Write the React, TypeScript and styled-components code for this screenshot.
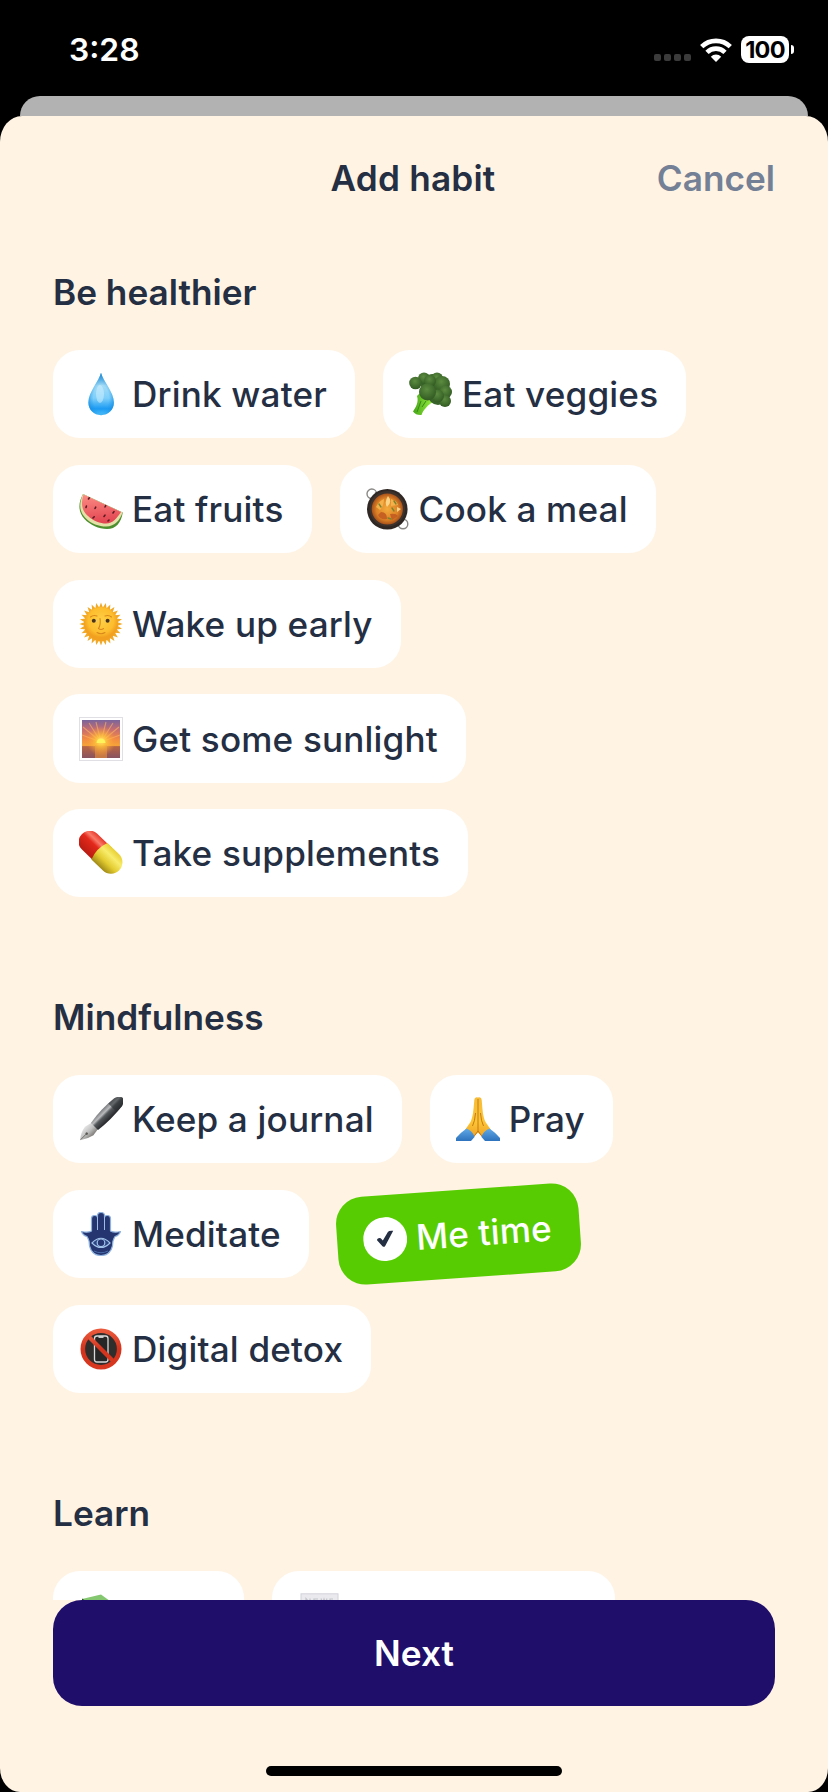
import styled, { createGlobalStyle } from "styled-components";
import { ReactNode } from "react";

type Habit = {
  name?: string;
  icon: ReactNode;
  selected?: boolean;
  width?: number;
};
type Section = {
  title: string;
  habits: Habit[];
};

const Drop = () => (
  <Icon viewBox="0 0 44 44">
    <defs>
      <linearGradient id="drop" x1="0" y1="0" x2="0" y2="1">
        <stop offset="0" stopColor="#5aa6cf" />
        <stop offset="0.3" stopColor="#a5dcf6" />
        <stop offset="0.6" stopColor="#7dcffa" />
        <stop offset="0.85" stopColor="#1b9af2" />
        <stop offset="1" stopColor="#57c6fb" />
      </linearGradient>
      <radialGradient id="dropEdge" cx="0.5" cy="0.6" r="0.55">
        <stop offset="0.55" stopColor="#1d97ea" stopOpacity="0" />
        <stop offset="1" stopColor="#168be0" stopOpacity="0.8" />
      </radialGradient>
    </defs>
    <path
      d="M22 .8C20 9 9.4 20 9.400 30.600C9.400 38 15 43.200 22.100 43.200S34.900 38 34.900 30.600C34.900 20 24 9 22 .8Z"
      fill="url(#drop)"
    />
    <path
      d="M22 .8C20 9 9.400 20 9.400 30.600C9.400 38 15 43.200 22.100 43.200S34.900 38 34.900 30.600C34.900 20 24 9 22 .8Z"
      fill="url(#dropEdge)"
    />
    <ellipse cx="21" cy="22" rx="4" ry="9" fill="#d4f2ff" opacity="0.5" />
  </Icon>
);

const Broccoli = () => (
  <Icon viewBox="0 0 44 44">
    <defs>
      <radialGradient id="floret" cx="0.45" cy="0.35" r="0.65">
        <stop offset="0" stopColor="#5c8c40" />
        <stop offset="1" stopColor="#315a22" />
      </radialGradient>
      <linearGradient id="stem" x1="0" y1="0" x2="1" y2="0">
        <stop offset="0" stopColor="#45a516" />
        <stop offset="0.6" stopColor="#8ee53a" />
        <stop offset="1" stopColor="#49a31c" />
      </linearGradient>
    </defs>
    <path
      d="M8 24C10 30 7 35 4 39.5Q7 43.5 12.5 43C14 38 19 33 25 29L33 31L28 22L12 20Z"
      fill="url(#stem)"
    />
    <path d="M12 29L8 40M17 29L13 35" stroke="#368b18" strokeWidth="1" />
    <circle cx="24" cy="14" r="12" fill="#38632a" />
    <circle cx="29" cy="23" r="10" fill="#38632a" />
    <circle cx="15" cy="6.5" r="6" fill="url(#floret)" />
    <circle cx="28" cy="6.5" r="6" fill="url(#floret)" />
    <circle cx="6.5" cy="11" r="6.3" fill="url(#floret)" />
    <circle cx="33" cy="12" r="8" fill="url(#floret)" />
    <circle cx="21" cy="9" r="6" fill="url(#floret)" />
    <circle cx="36.500" cy="20" r="6.500" fill="url(#floret)" />
    <circle cx="36" cy="29" r="6" fill="url(#floret)" />
    <circle cx="28.500" cy="24" r="6.500" fill="url(#floret)" />
    <circle cx="18.5" cy="20" r="8.5" fill="url(#floret)" />
  </Icon>
);

const Watermelon = () => (
  <Icon viewBox="0 0 44 44">
    <defs>
      <linearGradient id="flesh" x1="0.3" y1="0" x2="0.4" y2="1">
        <stop offset="0" stopColor="#fb8b83" />
        <stop offset="1" stopColor="#e24350" />
      </linearGradient>
    </defs>
    <path
      d="M4 7C-1 16 -1 25 5.5 32C11 38 20 42 28 42C37 42 42 36 43.8 25.5Z"
      fill="#4d8f2e"
    />
    <path
      d="M4 7C0 16 0 24 6 30.5C12 37 20 39.5 27 39.5C36 39.5 41 33 43.5 25.5Z"
      fill="#e4e0a8"
    />
    <path
      d="M4.5 7.5C1.5 17 3 24 9 29C15 34.5 21 36.5 27 36.5C34 36.5 38 31 42 25Z"
      fill="url(#flesh)"
    />
    <path
      d="M9.5 12l.8 -1.2M7 20.5l.4 -1.4M16 21.5l.7 -1.4M26 20l.7 -1.4M14 31l1.2 -1.2M25 29.5l1 -1.4M34 26l1 -1.4M29 34l1 -1"
      stroke="#5a1a22"
      strokeWidth="1.6"
      strokeLinecap="round"
    />
  </Icon>
);

const Pan = () => (
  <Icon viewBox="0 0 44 44">
    <defs>
      <radialGradient id="stew">
        <stop offset="0" stopColor="#f3ab3c" />
        <stop offset="0.7" stopColor="#dc8226" />
        <stop offset="1" stopColor="#a9511a" />
      </radialGradient>
    </defs>
    <g fill="none" stroke="#8a8886" strokeWidth="1.4">
      <circle cx="5.8" cy="6.8" r="4.8" />
      <circle cx="37" cy="37" r="4.8" />
    </g>
    <circle cx="21.3" cy="22.3" r="20.3" fill="#2f2723" />
    <circle cx="21.3" cy="21.8" r="17.8" fill="#3e322c" />
    <circle cx="21.3" cy="22" r="15.6" fill="url(#stew)" />
    <path d="M22 9q5 6 -1 11q-3 -5 1 -11ZM31 20l4 2l-4 3Z" fill="#fbd488" />
    <path
      d="M10 20q4 -7 8 -8q0 7 -4 11ZM25 12q6 2 7 6l-7 1Z"
      fill="#f4b149"
    />
    <path
      d="M15 25q6 0 6 7q-7 1 -9 -4ZM24 27q6 -1 8 2l-6 4Z"
      fill="#c55f22"
    />
    <path
      d="M13 17l2 3M26 21l2 3M22 31l3 1M28 14l2 3"
      stroke="#7d832d"
      strokeWidth="1.4"
      strokeLinecap="round"
    />
  </Icon>
);

const Sun = () => (
  <Icon viewBox="0 0 44 44">
    <defs>
      <radialGradient id="sun" cx="0.5" cy="0.4">
        <stop offset="0" stopColor="#fed047" />
        <stop offset="0.75" stopColor="#fdbd2d" />
        <stop offset="1" stopColor="#f2a01f" />
      </radialGradient>
    </defs>
    {Array.from({ length: 28 }, (_, i) => (
      <path
        key={i}
        d="M19.9 6L22 .4L24.1 6Z"
        fill="#f2a927"
        transform={`rotate(${(i * 360) / 28} 22 22)`}
      />
    ))}
    <circle cx="22" cy="22" r="17" fill="url(#sun)" />
    <path
      d="M11.5 15q3 -2.5 6.5 -1M32.5 15q-3 -2.5 -6.500 -1M21 16.5q1 6 -1.5 10q2.500 2 5 0M18 30.5q4 2.5 8 0"
      fill="none"
      stroke="#d8871b"
      strokeWidth="1.1"
      strokeLinecap="round"
    />
    <ellipse cx="15.3" cy="18.8" rx="2.7" ry="1.7" fill="#eecb80" />
    <ellipse cx="28.700" cy="18.8" rx="2.7" ry="1.7" fill="#eecb80" />
    <circle cx="14.8" cy="18.8" r="2" fill="#4a3418" />
    <circle cx="28.6" cy="18.8" r="2" fill="#4a3418" />
  </Icon>
);

const Sunrise = () => (
  <Icon viewBox="0 0 44 44">
    <defs>
      <linearGradient id="sky" x1="0" y1="0" x2="0" y2="1">
        <stop offset="0" stopColor="#79649b" />
        <stop offset="0.25" stopColor="#c56d72" />
        <stop offset="0.5" stopColor="#f28a43" />
        <stop offset="0.67" stopColor="#f5a338" />
        <stop offset="0.7" stopColor="#b76543" />
        <stop offset="1" stopColor="#885361" />
      </linearGradient>
      <radialGradient id="glow">
        <stop offset="0" stopColor="#fff27c" />
        <stop offset="0.35" stopColor="#ffc93c" stopOpacity="0.9" />
        <stop offset="1" stopColor="#ff9a3b" stopOpacity="0" />
      </radialGradient>
    </defs>
    <rect x="0.5" y="0.5" width="43" height="43" fill="#fff" stroke="#dfdfe4" />
    <rect x="3" y="3" width="38" height="38" fill="url(#sky)" />
    <path
      d="M22 25L4 10M22 25L10 6M22 25L17 5M22 25L27 5M22 25L34 6M22 25L40 10M22 25L3 18M22 25L41 18"
      stroke="#ffb860"
      strokeWidth="1.1"
      opacity="0.6"
    />
    <rect x="16" y="28" width="12" height="13" fill="#e08a3a" opacity="0.7" />
    <circle cx="22" cy="24" r="15" fill="url(#glow)" opacity="0.85" />
    <path d="M17.5 26a4.5 4.5 0 0 1 9 0Z" fill="#fff35c" />
  </Icon>
);

const Pill = () => (
  <Icon viewBox="0 0 44 44">
    <defs>
      <linearGradient id="red" x1="0" y1="0" x2="0" y2="1">
        <stop offset="0" stopColor="#e8392b" />
        <stop offset="0.25" stopColor="#f97a68" />
        <stop offset="0.45" stopColor="#e3281b" />
        <stop offset="1" stopColor="#b81c12" />
      </linearGradient>
      <linearGradient id="yellow" x1="0" y1="0" x2="0" y2="1">
        <stop offset="0" stopColor="#e9cf32" />
        <stop offset="0.3" stopColor="#f8ec6c" />
        <stop offset="0.65" stopColor="#e3cc30" />
        <stop offset="1" stopColor="#a08a18" />
      </linearGradient>
    </defs>
    <g transform="rotate(44 21.5 21.2)">
      <path
        d="M27 10.2H6a10.5 11 0 0 0 -10.500 11a10.500 11 0 0 0 10.500 11H27Z"
        fill="url(#red)"
      />
      <path
        d="M20 9.7H36a11.5 11.5 0 0 1 0 23H20Q15.5 21.2 20 9.7Z"
        fill="url(#yellow)"
      />
    </g>
  </Icon>
);

const Pen = () => (
  <Icon viewBox="0 0 44 44">
    <defs>
      <linearGradient id="barrel" x1="0" y1="0" x2="0" y2="1">
        <stop offset="0" stopColor="#77797c" />
        <stop offset="0.3" stopColor="#b9bbbd" />
        <stop offset="0.5" stopColor="#56595c" />
        <stop offset="1" stopColor="#222428" />
      </linearGradient>
      <linearGradient id="nib" x1="0" y1="0" x2="0" y2="1">
        <stop offset="0" stopColor="#e2e3e2" />
        <stop offset="0.5" stopColor="#bfc0bf" />
        <stop offset="1" stopColor="#7b7975" />
      </linearGradient>
    </defs>
    <g transform="translate(1 43.300) rotate(-45)">
      <path
        d="M0 0Q6 -5 13 -6L22 -4V4.5L13 6Q6 4.500 0 0Z"
        fill="url(#nib)"
      />
      <path d="M1 0H9" stroke="#5c5a56" strokeWidth="0.8" />
      <circle cx="9.5" cy="0" r="1.3" fill="#5c5a56" />
      <path
        d="M20 -4.5Q36 -7.500 54 -5.5Q60 -3.5 60 0T54 5.500Q36 7.500 20 5.500Z"
        fill="url(#barrel)"
      />
      <path d="M54 -5.5Q60 -3.5 60 0T54 5.5Q50 6 46 6V-6Z" fill="#2c2e31" opacity="0.6" />
    </g>
  </Icon>
);

const Pray = () => (
  <Icon viewBox="0 0 44 44">
    <defs>
      <linearGradient id="hand" x1="0" y1="0" x2="0" y2="1">
        <stop offset="0" stopColor="#f6bc38" />
        <stop offset="0.6" stopColor="#fcc534" />
        <stop offset="1" stopColor="#ee9f26" />
      </linearGradient>
      <linearGradient id="sleeve" x1="0" y1="0" x2="0" y2="1">
        <stop offset="0" stopColor="#61a9e7" />
        <stop offset="1" stopColor="#2d72bd" />
      </linearGradient>
    </defs>
    <path
      d="M22 .5Q18.500 -.5 18.300 3C17.500 13 17 20 14.500 25L9 33L16 41.500L22 35.500L28 41.500L35 33L29.500 25C27 20 26.500 13 25.700 3Q25.500 -.5 22 .5Z"
      fill="url(#hand)"
    />
    <path
      d="M22 2V34M22 34L17.500 40M22 34L26.500 40M19.500 16Q19 24 16.500 29M24.500 16Q25 24 27.500 29"
      stroke="#c67a16"
      strokeWidth="1"
      fill="none"
    />
    <path d="M10.500 31.500Q17 34 18.500 40L15 44H0V41Q4 36 10.500 31.500Z" fill="url(#sleeve)" />
    <path d="M33.500 31.500Q27 34 25.500 40L29 44H44V41Q40 36 33.500 31.500Z" fill="url(#sleeve)" />
  </Icon>
);

const Hamsa = () => (
  <Icon viewBox="0 0 44 44">
    <path
      d="M12.500 6.500q0 -3 3 -3t3 2V3.500q0 -3 3.500 -3t3.500 3V5.500q0 -2 3 -2t3 3V19Q35 21 41.500 19.500Q40 23.500 36 24.500Q33.500 28 33.500 34Q31 43.500 22 43.500T10.500 34Q10.500 28 8 24.500Q4 23.500 2.500 19.500Q9 21 12.500 19Z"
      fill="#24356f"
      stroke="#8fb2de"
      strokeWidth="1.2"
      strokeLinejoin="round"
    />
    <path d="M18.500 5V18M25.500 5V18" stroke="#9dbde6" strokeWidth="1" />
    <path
      d="M13 31Q22 21.500 31 31Q22 40 13 31Z"
      fill="#2f4685"
      stroke="#a1c2e9"
      strokeWidth="1.2"
    />
    <circle cx="22" cy="30.800" r="3.800" fill="#24356f" stroke="#a1c2e9" strokeWidth="1.2" />
    <path d="M15 39q7 3.500 14 0" stroke="#4a6cab" strokeWidth="1" fill="none" />
  </Icon>
);

const NoPhones = () => (
  <Icon viewBox="0 0 44 44">
    <defs>
      <linearGradient id="ban" x1="0" y1="0" x2="0" y2="1">
        <stop offset="0" stopColor="#e9583b" />
        <stop offset="0.5" stopColor="#d2331d" />
        <stop offset="1" stopColor="#d8381f" />
      </linearGradient>
    </defs>
    <circle cx="22" cy="22" r="18" fill="#302e2d" />
    <rect
      x="15.5"
      y="9"
      width="13.5"
      height="26"
      rx="2.5"
      fill="#272626"
      stroke="#d9d9d9"
      strokeWidth="1.3"
    />
    <path d="M19.5 10h5" stroke="#d9d9d9" strokeWidth="1.8" />
    <path d="M9 9L35 35" stroke="url(#ban)" strokeWidth="4.3" />
    <circle cx="22" cy="22" r="18.2" fill="none" stroke="url(#ban)" strokeWidth="4.6" />
  </Icon>
);

const Check = () => (
  <Icon viewBox="0 0 44 44">
    <circle cx="22" cy="22" r="22" fill="#fff" />
    <path
      d="M13.600 22.300Q15 19.600 17.600 20.800L19.600 23.200L25.200 15Q26.200 13.600 30.600 14.300L21.400 29Q20.200 30 18.800 28.800Z"
      fill="#252f43"
    />
  </Icon>
);

const Book = () => (
  <Icon viewBox="0 0 44 44">
    <path d="M3 6L22 1.5L42 16L24 40L3 12Z" fill="#85c770" />
    <path d="M3 5.5L7 8L26 37L24 42L3 12Z" fill="#2c5428" />
  </Icon>
);

const News = () => (
  <Icon viewBox="0 0 44 44">
    <rect x="3" y="0.8" width="37" height="42" fill="#e9e9ee" stroke="#d2d2da" />
    <path
      d="M8 10V5.500l4 4.500V5.500M20 6h-4v4h4M23 5.500l1.500 4.500L26 6l1.500 4L29 5.500M35 6h-3v2h3V10h-3"
      fill="none"
      stroke="#c3c3cb"
      strokeWidth="1.2"
    />
  </Icon>
);

const sections: Section[] = [
  {
    title: "Be healthier",
    habits: [
      { name: "Drink water", icon: <Drop /> },
      { name: "Eat veggies", icon: <Broccoli /> },
      { name: "Eat fruits", icon: <Watermelon /> },
      { name: "Cook a meal", icon: <Pan /> },
      { name: "Wake up early", icon: <Sun /> },
      { name: "Get some sunlight", icon: <Sunrise /> },
      { name: "Take supplements", icon: <Pill /> },
    ],
  },
  {
    title: "Mindfulness",
    habits: [
      { name: "Keep a journal", icon: <Pen /> },
      { name: "Pray", icon: <Pray /> },
      { name: "Meditate", icon: <Hamsa /> },
      { name: "Me time", icon: <Check />, selected: true },
      { name: "Digital detox", icon: <NoPhones /> },
    ],
  },
  {
    title: "Learn",
    // only the top edge of these shows above the footer
    habits: [
      { icon: <Book />, width: 191 },
      { icon: <News />, width: 343 },
    ],
  },
];

function App() {
  return (
    <Screen>
      <GlobalStyle />
      <StatusBar>
        <Time>3:28</Time>
        <StatusIcons>
          <Signal>
            <i />
            <i />
            <i />
            <i />
          </Signal>
          <Wifi viewBox="0 0 32 24">
            <g fill="none" stroke="#fff" strokeWidth="4.6">
              <path d="M1.7 8.7a20.5 20.5 0 0 1 28.6 0" />
              <path d="M7 14.3a12.8 12.8 0 0 1 18 0" />
            </g>
            <path d="M10.8 18.7a7.4 7.4 0 0 1 10.4 0L16 24Z" fill="#fff" />
          </Wifi>
          <Battery>100</Battery>
          <BatteryCap />
        </StatusIcons>
      </StatusBar>
      <BackSheet />
      <Sheet>
        <Header>
          <Title>Add habit</Title>
          <Cancel>Cancel</Cancel>
        </Header>
        <Content>
          {sections.map((section) => (
            <section key={section.title}>
              <Heading>{section.title}</Heading>
              <Habits>
                {section.habits.map((habit, index) => (
                  <Chip
                    key={index}
                    $selected={habit.selected}
                    $width={habit.width}
                  >
                    {habit.icon}
                    {habit.name}
                  </Chip>
                ))}
              </Habits>
            </section>
          ))}
        </Content>
        <Footer>
          <NextButton>Next</NextButton>
          <HomeIndicator />
        </Footer>
      </Sheet>
    </Screen>
  );
}

export default App;

const GlobalStyle = createGlobalStyle`
  * {
    box-sizing: border-box;
  }

  body {
    margin: 0;
    background: #000;
    font-family: Inter, "Liberation Sans", sans-serif;
  }

  button {
    border: none;
    background: none;
    padding: 0;
    font: inherit;
  }
`;

const Screen = styled.div`
  display: flex;
  flex-direction: column;
  width: 828px;
  height: 1792px;
  overflow: hidden;
  background: #000;
`;

const StatusBar = styled.div`
  display: flex;
  justify-content: space-between;
  align-items: center;
  height: 96px;
  padding: 3px 34px 0 69px;
  color: #fff;
`;

const Time = styled.span`
  font-size: 31.8px;
  font-weight: 600;
`;

const StatusIcons = styled.div`
  display: flex;
  align-items: center;
`;

const Signal = styled.div`
  display: flex;
  gap: 3px;
  margin: 16px 9px 0 0;

  i {
    width: 7px;
    height: 7px;
    border-radius: 2px;
    background: #3b3b3b;
  }
`;

const Wifi = styled.svg`
  width: 32px;
  height: 24px;
  margin-right: 9px;
`;

const Battery = styled.span`
  width: 48px;
  height: 27px;
  border-radius: 8px;
  background: #fff;
  color: #000;
  font-size: 23.5px;
  font-weight: 700;
  letter-spacing: -0.8px;
  line-height: 27px;
  text-align: center;
`;

const BatteryCap = styled.span`
  width: 3px;
  height: 9px;
  margin-left: 2px;
  border-radius: 0 4px 4px 0;
  background: #fff;
`;

const BackSheet = styled.div`
  flex: none;
  height: 20px;
  margin: 0 20px;
  border-radius: 20px 20px 0 0;
  background: #b2b2b2;
`;

const Sheet = styled.main`
  display: flex;
  flex: 1;
  flex-direction: column;
  min-height: 0;
  overflow: hidden;
  border-radius: 22px 22px 20px 20px / 26px 26px 24px 24px;
  background: #fff3e4;
  color: #252f43;
`;

const Header = styled.header`
  display: grid;
  grid-template-columns: 1fr auto 1fr;
  align-items: center;
  flex: none;
  height: 124px;
  padding: 0 53px;
  font-size: 35.2px;
  font-weight: 600;
`;

const Title = styled.h1`
  grid-column: 2;
  margin: 0 2px 0 0;
  font: inherit;
  letter-spacing: 0.2px;
`;

const Cancel = styled.button`
  justify-self: end;
  color: #748095;
`;

const Content = styled.div`
  display: flex;
  flex: 1;
  flex-direction: column;
  gap: 97.7px;
  min-height: 0;
  padding: 30px 53px 0;
  overflow: hidden;
`;

const Heading = styled.h2`
  margin: 0 0 36px;
  font-size: 35.2px;
  font-weight: 600;
  line-height: 44px;
`;

const Habits = styled.div`
  display: flex;
  flex-wrap: wrap;
  gap: 26.5px 28px;
`;

const Chip = styled.button<{ $selected?: boolean; $width?: number }>`
  display: flex;
  align-items: center;
  gap: 9px;
  width: ${(p) => (p.$width ? `${p.$width}px` : "auto")};
  height: 88.3px;
  padding: 0 28px 0 26px;
  border-radius: 27px;
  background: ${(p) => (p.$selected ? "#58cc02" : "#fff")};
  color: ${(p) => (p.$selected ? "#fff" : "#252f43")};
  font-size: 35.1px;
  font-weight: 500;
  letter-spacing: 0.18px;
  white-space: nowrap;
  transform: ${(p) => (p.$selected ? "rotate(-4deg)" : "none")};
`;

const Icon = styled.svg`
  flex: none;
  width: 44px;
  height: 44px;
`;

const Footer = styled.footer`
  display: flex;
  flex: none;
  flex-direction: column;
  align-items: center;
  height: 192px;
  padding: 0 53px;
`;

const NextButton = styled.button`
  width: 100%;
  height: 106px;
  border-radius: 29px;
  background: #200e6b;
  color: #fff;
  font-size: 35.2px;
  font-weight: 600;
`;

const HomeIndicator = styled.div`
  width: 296px;
  height: 10px;
  margin-top: 60px;
  border-radius: 5px;
  background: #000;
`;
